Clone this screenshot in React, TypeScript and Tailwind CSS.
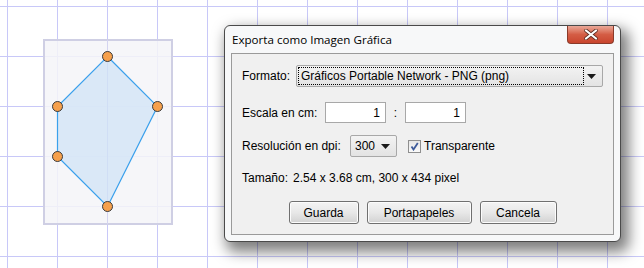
import React from "react";

const font = { fontFamily: '"Liberation Sans", Arial, sans-serif' };

function Grid() {
  const vx = [7, 57, 107, 157, 207, 257, 307, 357, 407, 457, 507, 557, 607];
  const hy = [6, 56, 106, 156, 206, 256];
  return (
    <svg width="644" height="268" className="absolute left-0 top-0">
      <rect x="0" y="0" width="644" height="268" fill="#ffffff" />
      {vx.map((x) => (
        <line key={"v" + x} x1={x + 0.5} y1={0} x2={x + 0.5} y2={268} stroke="#c8c8f8" strokeWidth="1" />
      ))}
      {hy.map((y) => (
        <line key={"h" + y} x1={0} y1={y + 0.5} x2={644} y2={y + 0.5} stroke="#c8c8f8" strokeWidth="1" />
      ))}
      <rect x="44" y="40" width="128" height="184" fill="#f4f4f8" fillOpacity="0.85" stroke="#cfcfe4" strokeWidth="2" />
      <line x1="107.5" y1="40" x2="107.5" y2="224" stroke="#d4d4f0" strokeWidth="1" />
      <polygon
        points="107.5,56.5 157.5,106.5 107.5,206.5 57.5,156.5 57.5,106.5"
        fill="#cfe2f6"
        fillOpacity="0.7"
        stroke="#3aa0ec"
        strokeWidth="1.2"
      />
      {[
        [107.5, 56.5],
        [157.5, 106.5],
        [107.5, 206.5],
        [57.5, 156.5],
        [57.5, 106.5],
      ].map(([x, y], i) => (
        <circle key={i} cx={x} cy={y} r="5" fill="#f6a04c" stroke="#3a3a3a" strokeWidth="1" />
      ))}
    </svg>
  );
}

function Arrow() {
  return (
    <svg width="9" height="5" viewBox="0 0 9 5">
      <polygon points="0,0 9,0 4.5,5" fill="#1a1a1a" />
    </svg>
  );
}

function Btn({ w, children }: { w: string; children: React.ReactNode }) {
  return (
    <div
      className={`${w} h-[23px] flex items-center justify-center rounded-[3px] border border-[#707070] bg-gradient-to-b from-[#f4f4f4] via-[#e8e8e8] to-[#d2d2d2] text-[12px] text-black shadow-[inset_0_0_0_1px_#fcfcfc]`}
    >
      {children}
    </div>
  );
}

export default function App() {
  return (
    <div className="relative w-[644px] h-[268px] overflow-hidden bg-white" style={font}>
      <Grid />
      <div className="absolute left-[224px] top-[25px] w-[397px] h-[217px] rounded-[6px] border border-[#4a4a4a] bg-[#f7f8f9] shadow-[5px_7px_14px_3px_rgba(0,0,0,0.5)] flex flex-col">
        <div className="h-[27px] relative flex items-start">
          <span
            className="ml-[7px] mt-[6px] text-[11.6px] leading-[15px] text-black"
            style={{ fontFamily: '"Open Sans", "Noto Sans", sans-serif' }}
          >
            Exporta como Imagen Gráfica
          </span>
          <div className="absolute right-[6px] top-0 w-[47px] h-[18px] rounded-b-[4px] border border-[#8a3a2a] border-t-0 bg-gradient-to-b from-[#e9a898] via-[#d45d45] to-[#c9452e] flex items-center justify-center">
            <svg width="14" height="11" viewBox="0 0 14 11">
              <path d="M2 1.5 L12 9.5 M12 1.5 L2 9.5" stroke="#5a2a20" strokeWidth="3.6" strokeLinecap="round" />
              <path d="M2 1.5 L12 9.5 M12 1.5 L2 9.5" stroke="#ffffff" strokeWidth="2.2" strokeLinecap="round" />
            </svg>
          </div>
        </div>
        <div className="mx-[6px] mb-[6px] flex-1 border border-[#9a9a9a] bg-[#f0f0f0] flex flex-col pl-[10px] pt-[11px] text-[12px] text-black">
          <div className="flex items-center h-[22px]">
            <span className="w-[54px]">Formato:</span>
            <div className="w-[307px] h-[22px] border border-[#a8a8a8] rounded-[2px] bg-gradient-to-b from-[#f3f3f3] to-[#e3e3e3] flex items-center pl-[1px] pr-[6px]">
              <div className="w-[286px] h-[18px] border border-dotted border-black flex items-center pl-[2px]">
                Gráficos Portable Network - PNG (png)
              </div>
              <div className="flex-1 flex justify-end">
                <Arrow />
              </div>
            </div>
          </div>
          <div className="flex items-center h-[21px] mt-[15px]">
            <span className="w-[83px]">Escala en cm:</span>
            <div className="w-[61px] h-[21px] border border-[#a8a8a8] bg-white flex items-center justify-end pr-[5px]">1</div>
            <span className="w-[19px] text-center">:</span>
            <div className="w-[61px] h-[21px] border border-[#a8a8a8] bg-white flex items-center justify-end pr-[5px]">1</div>
          </div>
          <div className="flex items-center h-[22px] mt-[12px]">
            <span className="w-[108px]">Resolución en dpi:</span>
            <div className="w-[47px] h-[22px] border border-[#a8a8a8] rounded-[2px] bg-gradient-to-b from-[#f3f3f3] to-[#e3e3e3] flex items-center pl-[4px] pr-[6px] justify-between">
              <span>300</span>
              <Arrow />
            </div>
            <div className="ml-[11px] w-[13px] h-[13px] border border-[#8f8f8f] bg-gradient-to-b from-[#e6e6e6] to-[#fafafa] flex items-center justify-center">
              <svg width="9" height="9" viewBox="0 0 9 9">
                <path d="M1.5 4.5 L3.5 7.5 L7.8 1" stroke="#3d5a9a" strokeWidth="1.8" fill="none" />
              </svg>
            </div>
            <span className="ml-[3px]">Transparente</span>
          </div>
          <div className="flex items-center h-[15px] mt-[14px] leading-[15px]">
            <span>Tamaño:</span>
            <span className="ml-[5px]">2.54 x 3.68 cm, 300 x 434 pixel</span>
          </div>
          <div className="flex justify-center gap-[8px] mt-[15px] -ml-[10px]">
            <Btn w="w-[70px]">Guarda</Btn>
            <Btn w="w-[105px]">Portapapeles</Btn>
            <Btn w="w-[77px]">Cancela</Btn>
          </div>
        </div>
      </div>
    </div>
  );
}
